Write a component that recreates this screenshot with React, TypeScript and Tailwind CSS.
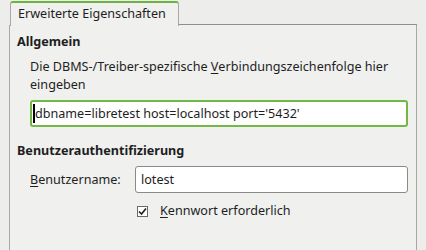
export default function App() {
    return (
        <div className="w-[426px] h-[250px] overflow-hidden bg-[#ededec] text-[12.6px] text-[#1e1e1e] font-['Noto_Sans',sans-serif] leading-[18px]">
            <div className="flex items-end pl-[9px] pr-[9px] pt-[1px]">
                <div className="ml-[1px] w-[169px] h-[25px] rounded-t-[3px] border-t-2 border-x border-t-[#6db33f] border-x-[#a8a8a8] bg-[#f0f0ef] pl-[7px] pt-[2px] relative z-10 -mb-[1px]">
                    Erweiterte Eigenschaften
                </div>
                <div className="flex-1 border-b border-[#8e8e8e] rounded-tr-[2px] border-r h-[1px]" />
            </div>
            <div className="mx-[9px] border-l border-r border-[#a8a8a8] bg-[#f0f0ef] h-[230px] pl-[7px] pr-[8px] pt-[8px]">
                <div className="font-bold">Allgemein</div>
                <div className="pl-[13px] mt-[7px]">
                    <div className="flex">
                        <span className="whitespace-pre">Die DBMS-/Treiber-spezifische </span>
                        <span className="underline underline-offset-2">V</span>
                        <span>erbindungszeichenfolge hier</span>
                    </div>
                    <div>eingeben</div>
                </div>
                <div className="ml-[13px] mt-[6px] h-[27px] rounded-[3px] border-2 border-[#73b844] bg-white flex items-center pl-[1px]">
                    <span className="w-[2px] h-[19px] bg-black" />
                    <span>dbname=libretest host=localhost port='5432'</span>
                </div>
                <div className="font-bold mt-[15px]">Benutzerauthentifizierung</div>
                <div className="flex items-center mt-[6px]">
                    <div className="pl-[13px] w-[118px] flex">
                        <span className="underline underline-offset-2">B</span>
                        <span>enutzername:</span>
                    </div>
                    <div className="flex-1 h-[27px] rounded-[3px] border border-[#8a8a8a] bg-white flex items-center pl-[5px]">
                        lotest
                    </div>
                </div>
                <div className="flex items-center mt-[9px] pl-[120px]">
                    <div className="w-[11px] h-[11px] border border-[#6a6a6a] bg-white flex items-center justify-center">
                        <svg width="9" height="9" viewBox="0 0 9 9">
                            <path d="M1 4.5 L3.5 7 L8 1.5" fill="none" stroke="#1e1e1e" strokeWidth="1.6" />
                        </svg>
                    </div>
                    <div className="ml-[12px] flex">
                        <span className="underline underline-offset-2">K</span>
                        <span>ennwort erforderlich</span>
                    </div>
                </div>
            </div>
        </div>
    );
}
